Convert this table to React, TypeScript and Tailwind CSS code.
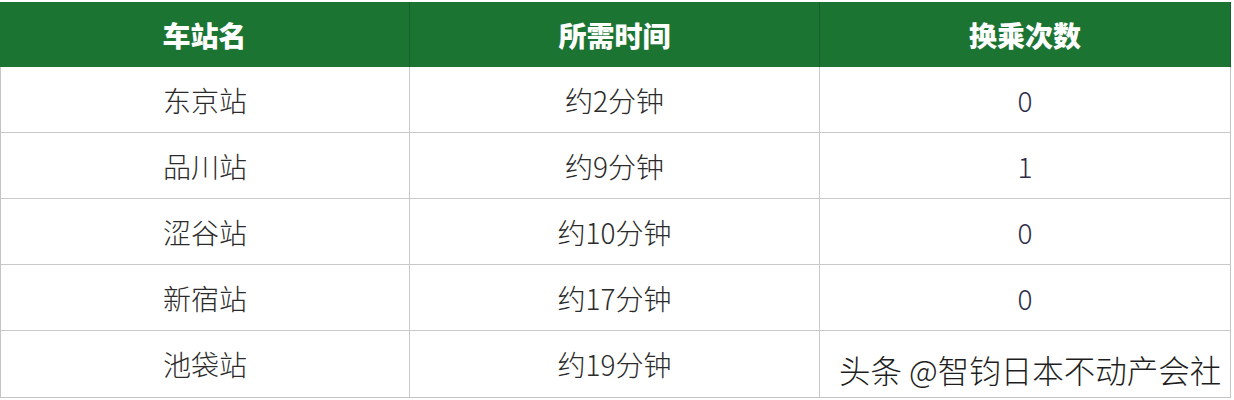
import React from "react";

const rows = [
  ["东京站", "约2分钟", "0"],
  ["品川站", "约9分钟", "1"],
  ["涩谷站", "约10分钟", "0"],
  ["新宿站", "约17分钟", "0"],
  ["池袋站", "约19分钟", ""],
];

export default function App() {
  return (
    <div
      className="w-[1234px] h-[400px] bg-white relative overflow-hidden"
      style={{ fontFamily: '"Noto Sans CJK SC", "Noto Sans", sans-serif' }}
    >
      <div className="pt-[2px] w-[1231px]">
        <div className="grid grid-cols-[410px_410px_411px] bg-[#1b7432] h-[65px] text-white font-black text-[28px]">
          <div className="flex items-center justify-center border-r border-[#14602a]">车站名</div>
          <div className="flex items-center justify-center border-r border-[#14602a]">所需时间</div>
          <div className="flex items-center justify-center border-r border-[#14602a]">换乘次数</div>
        </div>
        <div className="border-l border-b border-[#c4c4c4]">
          {rows.map((r, i) => (
            <div
              key={i}
              className="grid grid-cols-[409px_410px_411px] h-[66px] border-b border-[#c9c9c9] last:border-b-0 text-[28px] font-light text-[#2b2b2b]"
            >
              <div className="flex items-center justify-center border-r border-[#c9c9c9]">{r[0]}</div>
              <div className="flex items-center justify-center border-r border-[#c9c9c9]">{r[1]}</div>
              <div className="flex items-center justify-center border-r border-[#c4c4c4] text-[#2e2b4a]">{r[2]}</div>
            </div>
          ))}
        </div>
      </div>
      <div
        className="absolute left-[839px] top-[346px] text-[31.5px] font-light text-[#1e1e1e] whitespace-nowrap"
        style={{ textShadow: "1px 1px 0 #fff, -1px -1px 0 #fff, 1px -1px 0 #fff, -1px 1px 0 #fff" }}
      >
        头条 @智钧日本不动产会社
      </div>
    </div>
  );
}
